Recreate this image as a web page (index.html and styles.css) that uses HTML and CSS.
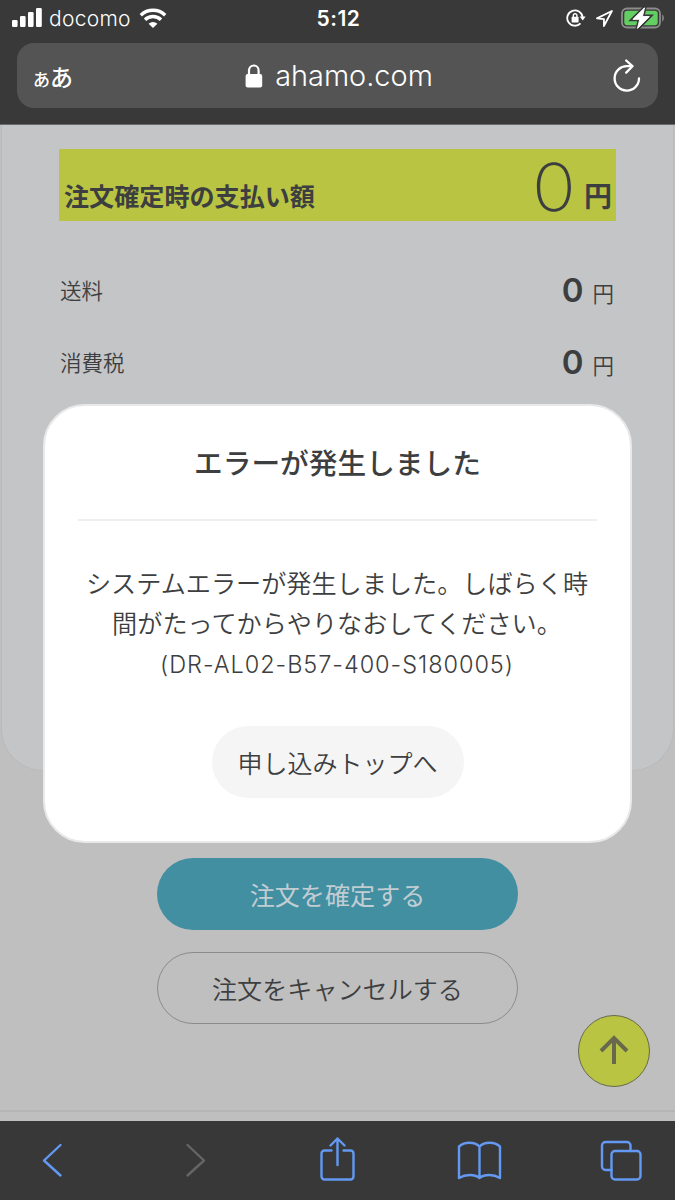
FILE: index.html
```html
<!DOCTYPE html>
<html lang="ja">
<head>
    <meta charset="UTF-8">
    <meta name="viewport" content="width=device-width, initial-scale=1.0">
    <title>ahamo</title>
    <link rel="stylesheet" href="styles.css">
</head>
<body>
    <header class="browser-top">
        <div class="status-bar">
            <div class="status-left">
                <svg class="signal" width="30" height="19" viewBox="0 0 30 19" fill="#fff">
                    <rect x="0" y="12" width="5.6" height="7" rx="1.3"/>
                    <rect x="8" y="8" width="5.6" height="11" rx="1.3"/>
                    <rect x="16" y="4" width="5.6" height="15" rx="1.3"/>
                    <rect x="24" y="0" width="5.8" height="19" rx="1.3"/>
                </svg>
                <span class="carrier">docomo</span>
                <svg class="wifi" width="28" height="21" viewBox="0 0 28 21" fill="none" stroke="#fff" stroke-width="3.4">
                    <path d="M1.8 8.2a17.6 17.6 0 0 1 24.4 0"/>
                    <path d="M6 12.8a11.5 11.5 0 0 1 16 0"/>
                    <path d="M9.6 16.8a6.5 6.5 0 0 1 8.800 0L14 21z" fill="#fff" stroke="none"/>
                </svg>
            </div>
            <span class="clock">5:12</span>
            <div class="status-right">
                <svg width="20" height="18" viewBox="0 0 20 18" fill="none" stroke="#fff" stroke-width="1.8">
                    <path d="M14.5 14.4A7.7 7.7 0 1 1 16.6 8"/>
                    <path d="M13.6 7.6h6L16.8 11.6z" fill="#fff" stroke="none"/>
                    <rect x="5.6" y="7.8" width="7" height="5.6" rx=".7" fill="#fff" stroke="none"/>
                    <path d="M7.3 8V6.5a1.8 1.8 0 0 1 3.6 0V8" stroke-width="1.4"/>
                </svg>
                <svg class="location" width="17" height="17" viewBox="0 0 17 17" fill="none" stroke="#fff" stroke-width="1.8" stroke-linejoin="round">
                    <path d="M15.9 1L1 8.4l7 .7-.1 6.900z"/>
                </svg>
                <svg class="battery" width="44" height="22" viewBox="0 0 44 22">
                    <rect x="1" y="1.5" width="38" height="19" rx="5" fill="none" stroke="#8c8c8c" stroke-width="1.8"/>
                    <rect x="3.3" y="3.8" width="33.4" height="14.4" rx="3" fill="#63cf63"/>
                    <path d="M41.2 7.5c2.2 1.2 2.2 5.800 0 7z" fill="#8c8c8c"/>
                    <path class="bolt-edge" d="M23.500 .8L12 12.300h6.800L16.500 21.400 28.300 9.600h-6.900z"/>
                    <path class="bolt" d="M23.500 .8L12 12.300h6.800L16.500 21.400 28.300 9.600h-6.900z"/>
                </svg>
            </div>
        </div>
        <div class="address-bar">
            <div class="text-size"><span class="small">あ</span><span>あ</span></div>
            <div class="site">
                <svg width="18" height="24" viewBox="0 0 18 24">
                    <path d="M4 11V6.5a4.8 5 0 0 1 9.6 0V11" fill="none" stroke="#fff" stroke-width="2.2"/>
                    <rect x=".6" y="10" width="16.6" height="13.6" rx="2" fill="#fff"/>
                </svg>
                <span>ahamo.com</span>
            </div>
            <svg class="reload" width="28" height="34" viewBox="0 0 28 34" fill="none" stroke="#fff" stroke-width="2.3" stroke-linecap="round" stroke-linejoin="round">
                <path d="M26 19.5A12.2 12.2 0 1 1 14 7.2h5.2"/>
                <path d="M13.2 1.5l6.2 5.7-6.2 6.4"/>
            </svg>
        </div>
    </header>

    <main class="page">
        <section class="order">
            <div class="total">
                <span class="total-label">注文確定時の支払い額</span>
                <span class="total-price"><span class="total-num">0</span><span class="total-yen">円</span></span>
            </div>
            <div class="row">
                <span class="row-label">送料</span>
                <span class="price"><b>0</b><span>円</span></span>
            </div>
            <div class="row">
                <span class="row-label">消費税</span>
                <span class="price"><b>0</b><span>円</span></span>
            </div>
        </section>

        <div class="actions">
            <button class="btn confirm">注文を確定する</button>
            <button class="btn cancel">注文をキャンセルする</button>
        </div>
        <div class="footer-line"></div>

        <button class="to-top">
            <svg width="30" height="30" viewBox="0 0 30 30" fill="none" stroke="#68694c" stroke-width="4">
                <path d="M15 29V3"/>
                <path d="M2 16L15 3l13 13"/>
            </svg>
        </button>

        <div class="modal">
            <h2>エラーが発生しました</h2>
            <p class="message">システムエラーが発生しました。しばらく時<br>間がたってからやりなおしてください。<br><span class="code">(DR-AL02-B57-400-S180005)</span></p>
            <button class="modal-btn">申し込みトップへ</button>
        </div>
    </main>

    <nav class="toolbar">
        <svg width="46" height="46" viewBox="0 0 46 46"><path d="M30.5 8L14 23.500l16.500 15"/></svg>
        <svg class="disabled" width="46" height="46" viewBox="0 0 46 46"><path d="M15.5 8L32 23.500 15.500 38.500"/></svg>
        <svg width="46" height="46" viewBox="0 0 46 46">
            <path d="M16.500 13.500H9.500a3 3 0 0 0-3 3V39.500a3 3 0 0 0 3 3h26a3 3 0 0 0 3-3V16.500a3 3 0 0 0-3-3h-7"/>
            <path d="M22.500 28V1.500M15.500 8.500l7-7 7 7"/>
        </svg>
        <svg width="46" height="46" viewBox="0 0 46 46">
            <path d="M22.500 9.500v31.500C17.500 37 8.500 37 2 41V9.500C7.500 4.500 17.500 4.500 22.500 9.500zM22.500 9.500c5-5 15-5 20.500 0V41C36.500 37 27.500 37 22.500 41"/>
        </svg>
        <svg width="46" height="46" viewBox="0 0 46 46">
            <rect x="12.5" y="14" width="29" height="28.500" rx="3.5"/>
            <path d="M12.5 33H6.500A3.500 3.500 0 0 1 3 29.500V8.500a3.500 3.500 0 0 1 3.500-3.500H28A3.500 3.500 0 0 1 31.500 8.500V14"/>
        </svg>
    </nav>
</body>
</html>
```
FILE: styles.css
```css
* {
    box-sizing: border-box;
}
body {
    margin: 0;
    width: 675px;
    height: 1200px;
    overflow: hidden;
    display: flex;
    flex-direction: column;
    font-family: Inter, "Noto Sans CJK JP", sans-serif;
    color: #3d3e40;
    background: #bfbfbf;
}
button {
    font-family: "Noto Sans CJK JP", sans-serif;
    padding: 0;
    border: none;
    white-space: nowrap;
}
svg {
    display: block;
    flex-shrink: 0;
}

/* status bar + address bar */
.browser-top {
    height: 125px;
    background: #393939;
    color: #fff;
    border-bottom: 1px solid #6a6b6c;
}
.status-bar {
    height: 43px;
    padding: 0 10px 7px 12px;
    display: grid;
    grid-template-columns: 1fr auto 1fr;
    align-items: center;
}
.status-left,
.status-right {
    display: flex;
    align-items: center;
}
.status-right {
    justify-content: flex-end;
}
.signal {
    margin-bottom: 2px;
}
.carrier {
    font-size: 21px;
    font-weight: 350;
    letter-spacing: 0.3px;
    margin: 0 8px 0 7px;
}
.wifi {
    margin-bottom: 2px;
}
.clock {
    font-size: 21px;
    font-weight: 600;
    letter-spacing: 0.5px;
}
.location {
    margin: 0 8px 0 10px;
}
.battery {
    overflow: visible;
}
.bolt {
    fill: #fff;
    stroke: #fff;
    stroke-width: 1;
    stroke-linejoin: round;
}
.bolt-edge {
    fill: #393939;
    stroke: #393939;
    stroke-width: 4;
}
.address-bar {
    height: 65px;
    margin: 0 17px;
    padding: 0 17px 0 16px;
    border-radius: 17px;
    background: #545454;
    display: grid;
    grid-template-columns: 1fr auto 1fr;
    align-items: center;
}
.text-size {
    font-family: "Noto Sans CJK JP", sans-serif;
    font-size: 23px;
    font-weight: 500;
    line-height: 34px;
    margin-top: 3px;
}
.text-size .small {
    font-size: 17px;
}
.site {
    display: flex;
    align-items: center;
    gap: 12px;
    margin-left: 4px;
    font-size: 28.9px;
    font-weight: 350;
}
.reload {
    justify-self: end;
}

/* order page behind the dialog */
.page {
    position: relative;
    height: 996px;
}
.order {
    height: 646px;
    margin: 0 1px;
    padding: 24px 58px 0 57px;
    background: #c4c5c7;
    border: 1px solid #b9babc;
    border-top: none;
    border-radius: 0 0 42px 42px;
}
.total {
    height: 72px;
    margin-right: -1px;
    padding: 0 4px 0 5px;
    background: #b8c442;
    display: flex;
    justify-content: space-between;
}
.total-label {
    font-family: "Noto Sans CJK JP", sans-serif;
    font-size: 25.1px;
    font-weight: 700;
    line-height: 92px;
}
.total-price {
    display: flex;
}
.total-num {
    font-size: 66px;
    font-weight: 250;
    line-height: 76px;
    transform: scaleX(1.1);
    transform-origin: right;
}
.total-yen {
    font-size: 28px;
    font-weight: 700;
    line-height: 96px;
    margin-left: 8px;
}
.row {
    height: 72px;
    display: flex;
    justify-content: space-between;
    align-items: center;
    font-size: 21.5px;
    font-weight: 350;
}
.row-label {
    margin-bottom: 4px;
    padding-left: 1px;
}
.total + .row {
    margin-top: 34px;
}
.price {
    display: flex;
    align-items: baseline;
    gap: 9px;
    margin: 0 1px 2px 0;
}
.price b {
    font-size: 33px;
    font-weight: 600;
}
.actions {
    margin-top: 87px;
    display: flex;
    flex-direction: column;
    align-items: center;
    gap: 22px;
}
.btn {
    width: 361px;
    height: 72px;
    border-radius: 36px;
    font-size: 25.1px;
}
.confirm {
    background: #428fa2;
    color: #c1cdd2;
    font-weight: 400;
}
.cancel {
    background: transparent;
    border: 1px solid #8b8b8b;
    color: #3d3e40;
    font-weight: 350;
}
.footer-line {
    margin-top: 86px;
    height: 2px;
    background: #b5b5b5;
}
.to-top {
    position: absolute;
    left: 578px;
    top: 890px;
    width: 72px;
    height: 72px;
    padding-bottom: 2px;
    border: 1.5px solid #68694c;
    border-radius: 50%;
    background: #b8c442;
    display: flex;
    align-items: center;
    justify-content: center;
}

/* error dialog */
.modal {
    position: absolute;
    left: 43px;
    top: 279px;
    width: 589px;
    height: 439px;
    padding: 0 33px;
    background: #fff;
    border: 2px solid #e9e9e9;
    border-radius: 42px;
    text-align: center;
}
.modal h2 {
    margin: 0;
    height: 115px;
    border-bottom: 2px solid #efefef;
    font-size: 28.7px;
    font-weight: 500;
    line-height: 116px;
}
.message {
    margin: 43px 0 41px -1px;
    font-size: 25.15px;
    font-weight: 350;
    line-height: 40px;
    white-space: nowrap;
}
.code {
    font-size: 23.5px;
    letter-spacing: 0.95px;
}
.modal-btn {
    width: 252px;
    height: 72px;
    border-radius: 36px;
    background: #f5f5f5;
    color: #3d3e40;
    font-size: 25px;
    font-weight: 350;
}

/* bottom toolbar */
.toolbar {
    height: 79px;
    padding: 0 30px 2px;
    background: #383838;
    display: flex;
    justify-content: space-between;
    align-items: center;
}
.toolbar svg {
    fill: none;
    stroke: #6399f2;
    stroke-width: 2.4;
    stroke-linecap: round;
    stroke-linejoin: round;
}
.toolbar .disabled {
    stroke: #656565;
}
```
